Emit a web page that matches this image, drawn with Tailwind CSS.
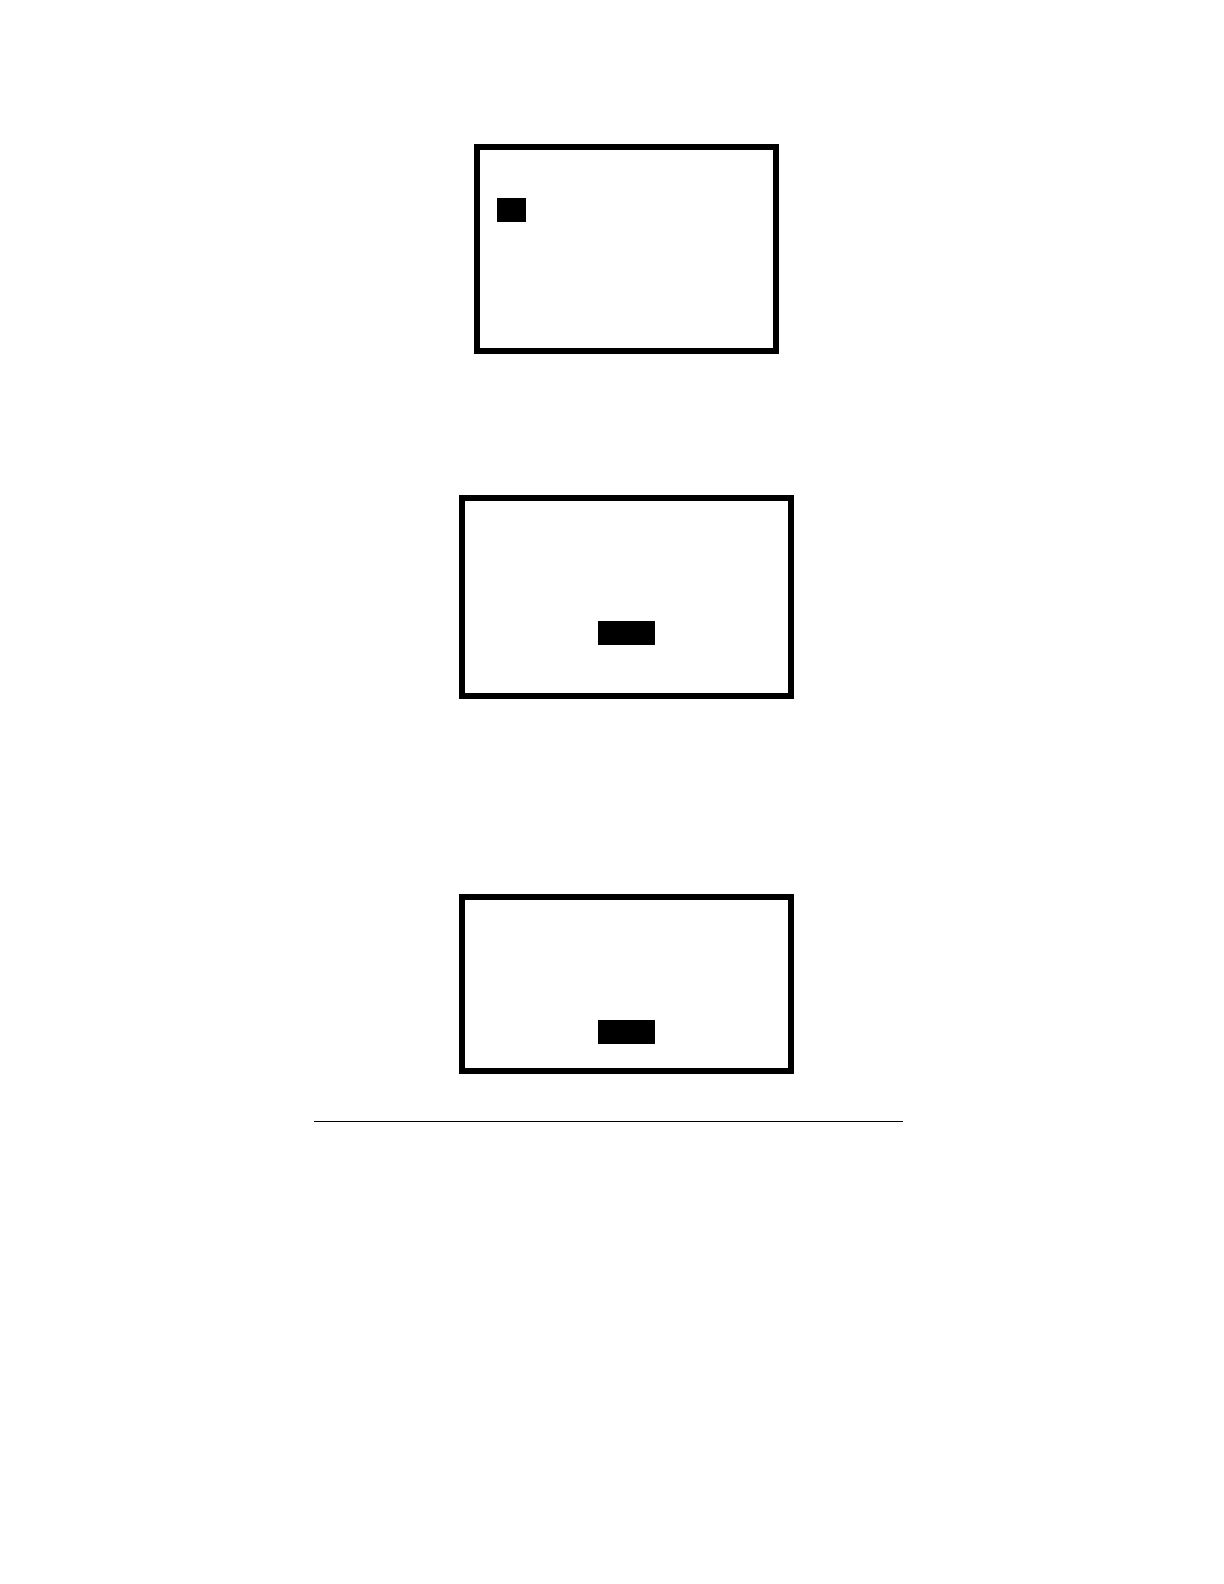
<!DOCTYPE html>
<html lang="en">
<head>
  <meta charset="UTF-8">
  <meta name="viewport" content="width=device-width, initial-scale=1.0">
  <title>Display Screens</title>
  <script src="https://cdn.jsdelivr.net/npm/@tailwindcss/browser@4"></script>
</head>
<body class="bg-white min-h-screen">
  <main class="flex flex-col items-center pt-36 pl-[29px]">
    <!-- Menu screen -->
    <section class="w-[305px] border-6 border-black pt-12 pb-[126px] pl-[17px]">
      <div class="w-[29px] h-6 bg-black"></div>
    </section>

    <!-- Message screen -->
    <section class="w-[335px] border-6 border-black pt-30 pb-12 mt-[141px]">
      <div class="w-[57px] h-6 bg-black mx-auto"></div>
    </section>

    <!-- Confirmation screen -->
    <section class="w-[335px] border-6 border-black pt-30 pb-6 mt-[195px]">
      <div class="w-[57px] h-6 bg-black mx-auto"></div>
    </section>
  </main>

  <!-- Footer rule -->
  <footer class="flex justify-center pr-[7px] mt-[47px]">
    <hr class="w-[589px] border-black">
  </footer>
</body>
</html>
